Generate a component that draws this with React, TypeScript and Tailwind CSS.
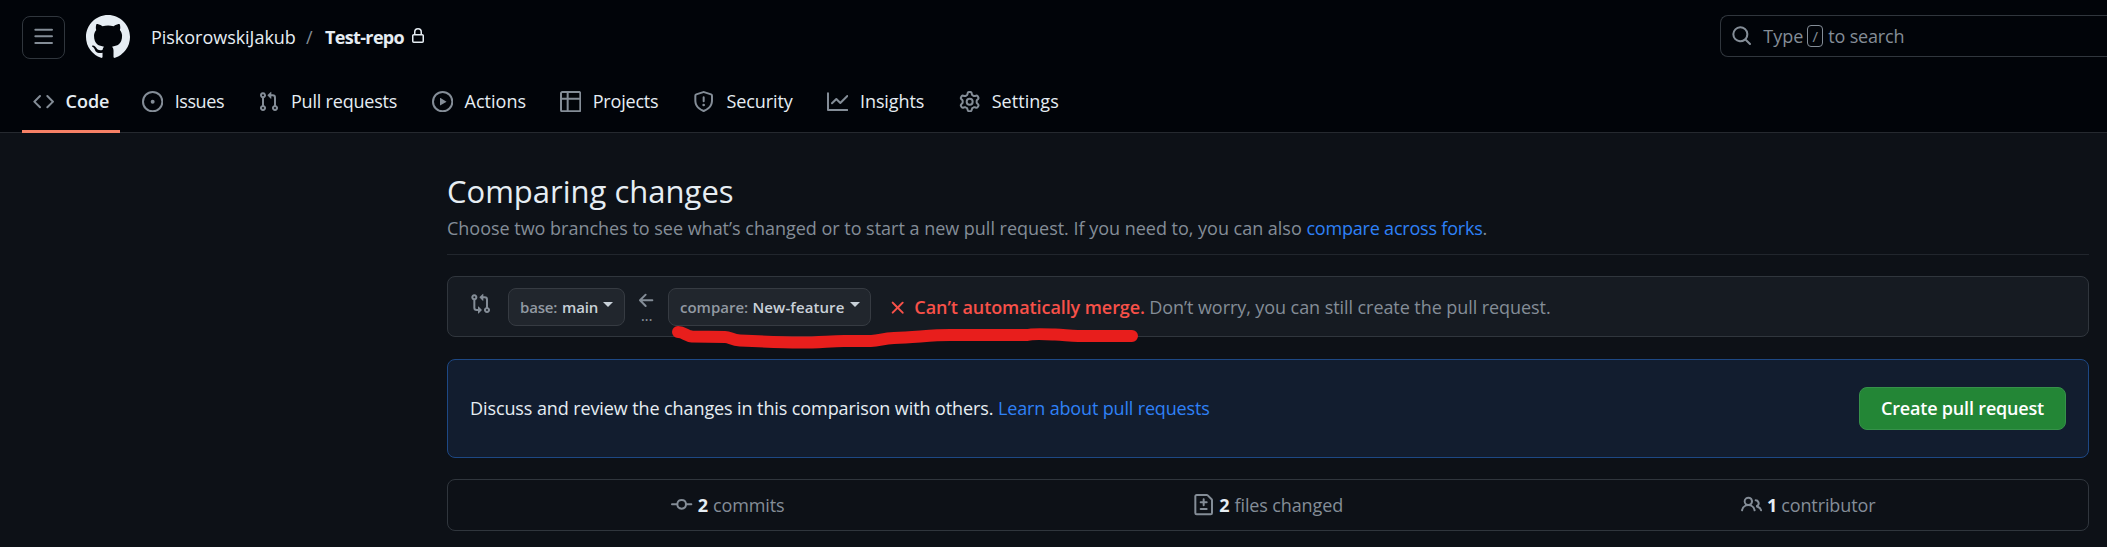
import type { ReactNode } from "react";

const paths = {
  menu: "M1 2.75A.75.75 0 0 1 1.75 2h12.5a.75.75 0 0 1 0 1.5H1.75A.75.75 0 0 1 1 2.75Zm0 5A.75.75 0 0 1 1.75 7h12.5a.75.75 0 0 1 0 1.5H1.75A.75.75 0 0 1 1 7.75ZM1.75 12h12.5a.75.75 0 0 1 0 1.5H1.75a.75.75 0 0 1 0-1.5Z",
  github:
    "M8 0c4.42 0 8 3.58 8 8a8.013 8.013 0 0 1-5.45 7.59c-.4.08-.55-.17-.55-.38 0-.27.01-1.13.01-2.2 0-.75-.25-1.23-.54-1.48 1.78-.2 3.65-.88 3.65-3.95 0-.88-.31-1.59-.82-2.15.08-.2.36-1.02-.08-2.12 0 0-.67-.22-2.2.82-.64-.18-1.32-.27-2-.27-.68 0-1.36.09-2 .27-1.53-1.03-2.2-.82-2.2-.82-.44 1.1-.16 1.92-.08 2.12-.51.56-.82 1.28-.82 2.15 0 3.06 1.86 3.75 3.64 3.95-.23.2-.44.55-.51 1.07-.46.21-1.61.55-2.33-.66-.15-.24-.6-.83-1.23-.82-.67.01-.27.38.01.53.34.19.73.9.82 1.13.16.45.68 1.31 2.69.94 0 .67.01 1.3.01 1.49 0 .21-.15.45-.55.38A7.995 7.995 0 0 1 0 8c0-4.42 3.58-8 8-8Z",
  lock: "M4 4a4 4 0 0 1 8 0v2h.25c.966 0 1.75.784 1.75 1.75v5.5A1.75 1.75 0 0 1 12.25 15h-8.5A1.75 1.75 0 0 1 2 13.25v-5.5C2 6.784 2.784 6 3.75 6H4Zm8.25 3.5h-8.5a.25.25 0 0 0-.25.25v5.5c0 .138.112.25.25.25h8.5a.25.25 0 0 0 .25-.25v-5.5a.25.25 0 0 0-.25-.25ZM10.5 6V4a2.5 2.5 0 1 0-5 0v2Z",
  search:
    "M10.68 11.74a6 6 0 0 1-7.922-8.982 6 6 0 0 1 8.982 7.922l3.04 3.04a.749.749 0 0 1-.326 1.275.749.749 0 0 1-.734-.215ZM11.5 7a4.499 4.499 0 1 0-8.997 0A4.499 4.499 0 0 0 11.5 7Z",
  code: "m11.28 3.22 4.25 4.25a.75.75 0 0 1 0 1.06l-4.25 4.25a.749.749 0 0 1-1.275-.326.749.749 0 0 1 .215-.734L13.94 8l-3.72-3.72a.749.749 0 0 1 .326-1.275.749.749 0 0 1 .734.215Zm-6.56 0a.751.751 0 0 1 1.042.018.751.751 0 0 1 .018 1.042L2.06 8l3.72 3.72a.749.749 0 0 1-.326 1.275.749.749 0 0 1-.734-.215L.47 8.53a.75.75 0 0 1 0-1.06Z",
  issue:
    "M8 9.5a1.5 1.5 0 1 0 0-3 1.5 1.5 0 0 0 0 3Z M8 0a8 8 0 1 1 0 16A8 8 0 0 1 8 0ZM1.5 8a6.5 6.5 0 1 0 13 0 6.5 6.5 0 0 0-13 0Z",
  pull: "M1.5 3.25a2.25 2.25 0 1 1 3 2.122v5.256a2.251 2.251 0 1 1-1.5 0V5.372A2.25 2.25 0 0 1 1.5 3.25Zm5.677-.177L9.573.677A.25.25 0 0 1 10 .854V2.5h1A2.5 2.5 0 0 1 13.5 5v5.628a2.251 2.251 0 1 1-1.5 0V5a1 1 0 0 0-1-1h-1v1.646a.25.25 0 0 1-.427.177L7.177 3.427a.25.25 0 0 1 0-.354ZM3.75 2.5a.75.75 0 1 0 0 1.5.75.75 0 0 0 0-1.5Zm0 9.5a.75.75 0 1 0 0 1.5.75.75 0 0 0 0-1.5Zm8.25.75a.75.75 0 1 0 1.5 0 .75.75 0 0 0-1.5 0Z",
  play: "M8 0a8 8 0 1 1 0 16A8 8 0 0 1 8 0ZM1.5 8a6.5 6.5 0 1 0 13 0 6.5 6.5 0 0 0-13 0Zm4.879-2.773 4.264 2.559a.25.25 0 0 1 0 .428l-4.264 2.559A.25.25 0 0 1 6 10.559V5.442a.25.25 0 0 1 .379-.215Z",
  table:
    "M0 1.75C0 .784.784 0 1.75 0h12.5C15.216 0 16 .784 16 1.75v12.5A1.75 1.75 0 0 1 14.25 16H1.75A1.75 1.75 0 0 1 0 14.25ZM6.5 6.5v8h7.75a.25.25 0 0 0 .25-.25V6.5Zm8-1.5V1.75a.25.25 0 0 0-.25-.25H6.5V5Zm-13 1.5v7.75c0 .138.112.25.25.25H5v-8ZM5 5V1.5H1.75a.25.25 0 0 0-.25.25V5Z",
  shield:
    "M7.467.133a1.748 1.748 0 0 1 1.066 0l5.25 1.68A1.75 1.75 0 0 1 15 3.48V7c0 1.566-.32 3.182-1.303 4.682-.983 1.498-2.585 2.813-5.032 3.855a1.697 1.697 0 0 1-1.33 0c-2.447-1.042-4.049-2.357-5.032-3.855C1.32 10.182 1 8.566 1 7V3.48a1.75 1.75 0 0 1 1.217-1.667Zm.61 1.429a.25.25 0 0 0-.153 0l-5.25 1.68a.25.25 0 0 0-.174.238V7c0 1.358.275 2.666 1.057 3.86.784 1.194 2.121 2.34 4.366 3.297a.196.196 0 0 0 .154 0c2.245-.956 3.582-2.104 4.366-3.298C13.225 9.666 13.5 8.36 13.5 7V3.48a.251.251 0 0 0-.174-.237l-5.25-1.68ZM8.75 4.75v3a.75.75 0 0 1-1.5 0v-3a.75.75 0 0 1 1.5 0ZM9 10.5a1 1 0 1 1-2 0 1 1 0 0 1 2 0Z",
  graph:
    "M1.5 1.75V13.5h13.75a.75.75 0 0 1 0 1.5H.75a.75.75 0 0 1-.75-.75V1.75a.75.75 0 0 1 1.5 0Zm14.28 2.53-5.25 5.25a.75.75 0 0 1-1.06 0L7 7.06 4.28 9.78a.751.751 0 0 1-1.042-.018.751.751 0 0 1-.018-1.042l3.25-3.25a.75.75 0 0 1 1.06 0L10 7.94l4.72-4.72a.751.751 0 0 1 1.042.018.751.751 0 0 1 .018 1.042Z",
  gear: "M8 0a8.2 8.2 0 0 1 .701.031C9.444.095 9.99.645 10.16 1.29l.288 1.107c.018.066.079.158.212.224.231.114.454.243.668.386.123.082.233.09.299.071l1.103-.303c.644-.176 1.392.021 1.82.63.27.385.506.792.704 1.218.315.675.111 1.422-.364 1.891l-.814.806c-.049.048-.098.147-.088.294.016.257.016.515 0 .772-.01.147.038.246.088.294l.814.806c.475.469.679 1.216.364 1.891a7.977 7.977 0 0 1-.704 1.217c-.428.61-1.176.807-1.82.63l-1.102-.302c-.067-.019-.177-.011-.3.071a5.909 5.909 0 0 1-.668.386c-.133.066-.194.158-.211.224l-.29 1.106c-.168.646-.715 1.196-1.458 1.26a8.006 8.006 0 0 1-1.402 0c-.743-.064-1.289-.614-1.458-1.26l-.289-1.106c-.018-.066-.079-.158-.212-.224a5.738 5.738 0 0 1-.668-.386c-.123-.082-.233-.09-.299-.071l-1.103.303c-.644.176-1.392-.021-1.82-.63a8.12 8.12 0 0 1-.704-1.218c-.315-.675-.111-1.422.363-1.891l.815-.806c.05-.048.098-.147.088-.294a6.214 6.214 0 0 1 0-.772c.01-.147-.038-.246-.088-.294l-.815-.806C.635 6.045.431 5.298.746 4.623a7.92 7.92 0 0 1 .704-1.217c.428-.61 1.176-.807 1.82-.63l1.102.302c.067.019.177.011.3-.071.214-.143.437-.272.668-.386.133-.066.194-.158.211-.224l.29-1.106C6.009.645 6.556.095 7.299.03 7.53.01 7.764 0 8 0Zm-.571 1.525c-.036.003-.108.036-.137.146l-.289 1.105c-.147.561-.549.967-.998 1.189-.173.086-.34.183-.5.29-.417.278-.97.423-1.529.27l-1.103-.303c-.109-.03-.175.016-.195.045-.22.312-.412.644-.573.99-.014.031-.021.11.059.19l.815.806c.411.406.562.957.53 1.456a4.709 4.709 0 0 0 0 .582c.032.499-.119 1.05-.53 1.456l-.815.806c-.081.08-.073.159-.059.19.162.346.353.677.573.989.02.03.085.076.195.046l1.102-.303c.56-.153 1.113-.008 1.53.27.161.107.328.204.501.29.447.222.85.629.997 1.189l.289 1.105c.029.109.101.143.137.146a6.6 6.6 0 0 0 1.142 0c.036-.003.108-.036.137-.146l.289-1.105c.147-.561.549-.967.998-1.189.173-.086.34-.183.5-.29.417-.278.97-.423 1.529-.27l1.103.303c.109.029.175-.016.195-.045.22-.313.411-.644.573-.99.014-.031.021-.11-.059-.19l-.815-.806c-.411-.406-.562-.957-.53-1.456a4.709 4.709 0 0 0 0-.582c-.032-.499.119-1.05.53-1.456l.815-.806c.081-.08.073-.159.059-.19a6.464 6.464 0 0 0-.573-.989c-.02-.03-.085-.076-.195-.046l-1.102.303c-.56.153-1.113.008-1.53-.27a4.44 4.44 0 0 0-.501-.29c-.447-.222-.85-.629-.997-1.189l-.289-1.105c-.029-.11-.101-.143-.137-.146a6.6 6.6 0 0 0-1.142 0ZM11 8a3 3 0 1 1-6 0 3 3 0 0 1 6 0ZM9.5 8a1.5 1.5 0 1 0-3.001.001A1.5 1.5 0 0 0 9.5 8Z",
  compare:
    "M9.573.677A.25.25 0 0 1 10 .854V2.5h1A2.5 2.5 0 0 1 13.5 5v5.628a2.251 2.251 0 1 1-1.5 0V5a1 1 0 0 0-1-1h-1v1.646a.25.25 0 0 1-.427.177L7.177 3.427a.25.25 0 0 1 0-.354ZM6 12v-1.646a.25.25 0 0 1 .427-.177l2.396 2.396a.25.25 0 0 1 0 .354l-2.396 2.396A.25.25 0 0 1 6 15.146V13.5H5A2.5 2.5 0 0 1 2.5 11V5.372a2.25 2.25 0 1 1 1.5 0V11a1 1 0 0 0 1 1ZM4 3.25a.75.75 0 1 0-1.5 0 .75.75 0 0 0 1.5 0ZM12.75 12a.75.75 0 1 0 0 1.5.75.75 0 0 0 0-1.5Z",
  arrow:
    "M7.78 12.53a.75.75 0 0 1-1.06 0L2.47 8.28a.75.75 0 0 1 0-1.06l4.25-4.25a.751.751 0 0 1 1.042.018.751.751 0 0 1 .018 1.042L4.81 7h7.44a.75.75 0 0 1 0 1.5H4.81l2.97 2.97a.75.75 0 0 1 0 1.06Z",
  cross:
    "M3.72 3.72a.75.75 0 0 1 1.06 0L8 6.94l3.22-3.22a.749.749 0 0 1 1.275.326.749.749 0 0 1-.215.734L9.06 8l3.22 3.22a.749.749 0 0 1-.326 1.275.749.749 0 0 1-.734-.215L8 9.06l-3.22 3.22a.751.751 0 0 1-1.042-.018.751.751 0 0 1-.018-1.042L6.94 8 3.72 4.78a.75.75 0 0 1 0-1.06Z",
  commit:
    "M11.93 8.5a4.002 4.002 0 0 1-7.86 0H.75a.75.75 0 0 1 0-1.5h3.32a4.002 4.002 0 0 1 7.86 0h3.32a.75.75 0 0 1 0 1.5Zm-1.43-.75a2.5 2.5 0 1 0-5 0 2.5 2.5 0 0 0 5 0Z",
  diff: "M1 1.75C1 .784 1.784 0 2.75 0h7.586c.464 0 .909.184 1.237.513l2.914 2.914c.329.328.513.773.513 1.237v9.586A1.75 1.75 0 0 1 13.25 16H2.75A1.75 1.75 0 0 1 1 14.25Zm1.75-.25a.25.25 0 0 0-.25.25v12.5c0 .138.112.25.25.25h10.5a.25.25 0 0 0 .25-.25V4.664a.25.25 0 0 0-.073-.177l-2.914-2.914a.25.25 0 0 0-.177-.073ZM8 3.25a.75.75 0 0 1 .75.75v1.5h1.5a.75.75 0 0 1 0 1.5h-1.5v1.5a.75.75 0 0 1-1.5 0V7h-1.5a.75.75 0 0 1 0-1.5h1.5V4A.75.75 0 0 1 8 3.25Zm-3 8a.75.75 0 0 1 .75-.75h4.5a.75.75 0 0 1 0 1.5h-4.5a.75.75 0 0 1-.75-.75Z",
  people:
    "M2 5.5a3.5 3.5 0 1 1 5.898 2.549 5.508 5.508 0 0 1 3.034 4.084.75.75 0 1 1-1.482.235 4 4 0 0 0-7.9 0 .75.75 0 0 1-1.482-.236A5.507 5.507 0 0 1 3.102 8.05 3.493 3.493 0 0 1 2 5.5ZM11 4a3.001 3.001 0 0 1 2.22 5.018 5.01 5.01 0 0 1 2.56 3.012.749.749 0 0 1-.885.954.752.752 0 0 1-.549-.514 3.507 3.507 0 0 0-2.522-2.372.75.75 0 0 1-.574-.73v-.352a.75.75 0 0 1 .416-.672A1.5 1.5 0 0 0 11 5.5.75.75 0 0 1 11 4Zm-5.5-.5a2 2 0 1 0-.001 3.999A2 2 0 0 0 5.5 3.5Z",
};

type IconName = keyof typeof paths;

function Icon({ name, className = "size-[21.33px] text-[#848d97]" }: { name: IconName; className?: string }) {
  return (
    <svg viewBox="0 0 16 16" fill="currentColor" fillRule="evenodd" className={`shrink-0 ${className}`}>
      <path d={paths[name]} />
    </svg>
  );
}

const tabs: { icon: IconName; label: string; width: string }[] = [
  { icon: "code", label: "Code", width: "w-[44.5px] font-semibold" },
  { icon: "issue", label: "Issues", width: "w-[51.7px] tracking-[-0.4px]" },
  { icon: "pull", label: "Pull requests", width: "w-[109px] tracking-[-0.2px]" },
  { icon: "play", label: "Actions", width: "w-[63.5px]" },
  { icon: "table", label: "Projects", width: "w-[69px] tracking-[-0.2px]" },
  { icon: "shield", label: "Security", width: "w-[69px] tracking-[-0.08px]" },
  { icon: "graph", label: "Insights", width: "w-[67px] tracking-[-0.1px]" },
  { icon: "gear", label: "Settings", width: "w-[68px] tracking-[0.05px]" },
];

function Header() {
  return (
    <header className="h-[133px] border-b border-[#25292f] bg-[#010409]">
      <div className="flex h-[74px] items-center pl-[22px]">
        <button className="flex h-[43px] w-[43px] items-center justify-center rounded-[8px] border border-[#30363d]">
          <Icon name="menu" />
        </button>
        <Icon name="github" className="ml-[21px] size-[44px] text-[#e6edf3]" />
        <nav className="ml-[21px] flex items-center">
          <span className="w-[155px] tracking-[-0.03px]">PiskorowskiJakub</span>
          <span className="w-[19px] text-[#848d97]">/</span>
          <span className="w-[85px] font-bold tracking-[-0.65px]">Test-repo</span>
          <Icon name="lock" className="-mt-0.5 size-4 text-[#e6edf3]" />
        </nav>
        <div className="-mt-[2px] ml-auto flex h-[42px] w-[387px] items-center rounded-l-[8px] border border-r-0 border-[#30363d] pl-[10px] text-[#848d97]">
          <Icon name="search" />
          <span className="ml-[11px] w-[44px]">Type</span>
          <span className="mr-[5px] flex h-[22px] w-4 items-center justify-center rounded-[4px] border border-[#848d97] text-[15px]">
            /
          </span>
          <span className="tracking-[-0.18px]">to search</span>
        </div>
      </div>
      <nav className="flex gap-[10.67px] pl-[22px]">
        {tabs.map((tab, i) => (
          <a
            key={tab.label}
            className={`flex h-[59px] items-start gap-[11.67px] px-[10.5px] pt-[15px] ${
              i === 0 ? "border-b-[3px] border-[#f78166]" : ""
            }`}
          >
            <span className="flex h-[25px] items-center">
              <Icon name={tab.icon} />
            </span>
            <span className={`leading-[25px] ${tab.width}`}>{tab.label}</span>
          </a>
        ))}
      </nav>
    </header>
  );
}

function Caret() {
  return <span className="-mt-[5px] border-x-[5.33px] border-t-[5.33px] border-x-transparent border-t-[#c9d1d9]" />;
}

function BranchButton({ children, className }: { children: ReactNode; className: string }) {
  return (
    <button
      className={`flex h-[38px] items-center rounded-[8px] border border-[#363b42] bg-[#21262d] pl-[11px] text-left text-[15px] font-semibold text-[#c9d1d9] ${className}`}
    >
      {children}
    </button>
  );
}

function CompareBar() {
  return (
    <section className="relative mt-[21px] flex h-[61px] items-center rounded-[8px] border border-[#30363d] bg-[#161b22] pl-[22px]">
      <Icon name="compare" className="-mt-[6px] size-[21.33px] text-[#848d97]" />
      <BranchButton className="ml-[16.7px] w-[117px]">
        <span className="w-[42px] pt-[2px] tracking-[-0.2px] text-[#9299a2]">base:</span>
        <span className="w-[41px] pt-[2px] tracking-[-0.15px]">main</span>
        <Caret />
      </BranchButton>
      <div className="flex w-[43px] flex-col items-center">
        <Icon name="arrow" className="size-[21.33px] text-[#848d97]" />
        <span className="-mt-[4px] text-[16px] leading-[16px] tracking-[-0.3px] text-[#848d97]">...</span>
      </div>
      <BranchButton className="w-[203px]">
        <span className="w-[72.5px] pt-[2px] text-[#9299a2]">compare:</span>
        <span className="w-[97px] pt-[2px] tracking-[0.1px]">New-feature</span>
        <Caret />
      </BranchButton>
      <Icon name="cross" className="mt-[2px] ml-[16px] size-[21.33px] text-[#f85149]" />
      <span className="ml-[6px] w-[235px] pt-[2px] font-semibold tracking-[-0.08px] text-[#f85149]">
        Can’t automatically merge.
      </span>
      <span className="pt-[2px] tracking-[-0.07px] text-[#848d97]">
        Don’t worry, you can still create the pull request.
      </span>
      <svg
        viewBox="0 0 480 40"
        className="pointer-events-none absolute top-[43px] left-[222px] h-10 w-[480px]"
        fill="none"
        stroke="#e81e1c"
        strokeWidth="12"
        strokeLinecap="round"
        strokeLinejoin="round"
      >
        <path d="M8 12C14 12 16 16 22 16.500L55 17C60 17 62 20 70 20.500C90 21.500 110 22.500 130 22.500C150 22.500 160 21 174 21L201 21C210 21 212 18.500 224 18C245 17.500 260 15 280 15L357 15C362 13.500 372 14 385 14.500C395 15 400 16 408 16L462 16" />
      </svg>
    </section>
  );
}

function Stat({ icon, count, label, gap }: { icon: IconName; count: number; label: string; gap: string }) {
  return (
    <div className="flex items-center justify-center text-[#848d97]">
      <Icon name={icon} />
      <span className={`font-bold text-[#e6edf3] ${gap}`}>{count}</span>
      <span className="tracking-[-0.12px]">{label}</span>
    </div>
  );
}

export default function App() {
  return (
    <div className="h-[547px] w-[2107px] overflow-hidden bg-[#0d1117] font-['Open_Sans','Noto_Sans',sans-serif] text-[18px] leading-[25px] whitespace-nowrap text-[#e6edf3]">
      <Header />
      <main className="ml-[447px] w-[1642px] pt-[36px]">
        <div className="h-[86px] border-b border-[#21262d]">
          <h1 className="text-[31px] leading-[44px]">Comparing changes</h1>
          <p className="mt-[3px] tracking-[-0.015px] text-[#848d97]">
            Choose two branches to see what’s changed or to start a new pull request. If you need to, you can also{" "}
            <a className="tracking-[-0.2px] text-[#2f81f7]">compare across forks</a>.
          </p>
        </div>
        <CompareBar />
        <section className="mt-[22px] flex h-[99px] items-center justify-between rounded-[8px] border border-[#1d4884] bg-[#121d2f] pr-[22px] pl-[22px]">
          <p>
            <span className="tracking-[-0.1px]">Discuss and review the changes in this comparison with others.</span>{" "}
            <a className="tracking-[-0.16px] text-[#2f81f7]">Learn about pull requests</a>
          </p>
          <button className="h-[43px] w-[207px] rounded-[8px] border border-[#36914a] bg-[#238636] font-semibold tracking-[-0.18px] text-white">
            Create pull request
          </button>
        </section>
        <section className="mt-[21px] grid h-[52px] grid-cols-3 rounded-[8px] border border-[#30363d] px-[10px]">
          <Stat icon="commit" count={2} label="commits" gap="mr-[5px] ml-[5px]" />
          <Stat icon="diff" count={2} label="files changed" gap="mr-[5px] ml-[5px]" />
          <Stat icon="people" count={1} label="contributor" gap="mr-[4px] ml-[5px]" />
        </section>
      </main>
    </div>
  );
}
